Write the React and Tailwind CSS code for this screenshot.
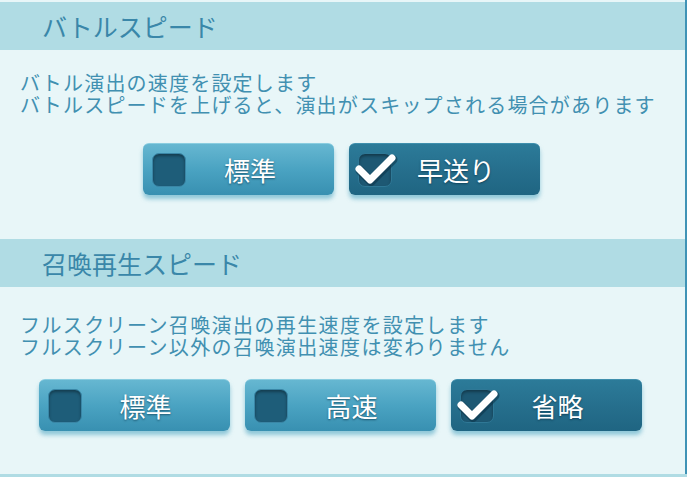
import React from "react";

const font = { fontFamily: '"Noto Sans CJK JP", "Noto Sans", sans-serif' };

function Check() {
  return (
    <svg
      className="absolute left-[-5px] top-[-3px] pointer-events-none"
      width="46"
      height="38"
      viewBox="0 0 46 38"
    >
      <polyline
        points="6,19 17,30 39,8"
        fill="none"
        stroke="rgba(10,50,70,0.55)"
        strokeWidth="9"
        strokeLinecap="round"
        strokeLinejoin="round"
        transform="translate(1,1.5)"
      />
      <polyline
        points="6,19 17,30 39,8"
        fill="none"
        stroke="#ffffff"
        strokeWidth="7"
        strokeLinecap="round"
        strokeLinejoin="round"
      />
    </svg>
  );
}

function OptionButton({ label, checked }) {
  return (
    <div
      className={
        "relative flex h-[52px] w-[191px] items-center rounded-[6px] pl-[9px] shadow-[0_4px_4px_rgba(70,160,190,0.55)] " +
        (checked
          ? "bg-gradient-to-b from-[#2c7b99] via-[#266f8d] to-[#1f6582] border-t border-[#3f8fad]"
          : "bg-gradient-to-b from-[#66b7d1] via-[#4aa3c2] to-[#3890b1] border-t border-[#8acde0]")
      }
    >
      <div className="relative h-[34px] w-[34px] shrink-0">
        <div
          className={
            "h-[34px] w-[34px] rounded-[7px] border shadow-[inset_0_2px_3px_rgba(0,0,0,0.35)] " +
            (checked ? "bg-[#1d5873] border-[#2f7896]" : "bg-[#1e5d79] border-[#3a86a6]")
          }
        />
        {checked && <Check />}
      </div>
      <div
        className="flex-1 pr-[20px] text-center text-[26px] leading-none text-white [text-shadow:0_1px_2px_rgba(0,40,60,0.6)]"
        style={font}
      >
        {label}
      </div>
    </div>
  );
}

function Header({ title, className = "" }) {
  return (
    <div className={"flex h-[48px] items-center bg-[#b0dce4] pl-[42px] " + className}>
      <span className="text-[25px] leading-none text-[#3a87a9]" style={font}>
        {title}
      </span>
    </div>
  );
}

export default function App() {
  return (
    <div className="h-[477px] w-[687px] overflow-hidden bg-[#e8f6f8]" style={font}>
      <div className="flex h-[474px] w-full flex-col border-r-2 border-[#3f93b6] pt-[2px]">
        <Header title="バトルスピード" />
        <div className="mt-[22px] pl-[20px] text-[20px] leading-[22px] text-[#4190b1] tracking-[1.2px]">
          <div>バトル演出の速度を設定します</div>
          <div>バトルスピードを上げると、演出がスキップされる場合があります</div>
        </div>
        <div className="mt-[27px] flex justify-center gap-[15px] pr-[2px]">
          <OptionButton label="標準" />
          <OptionButton label="早送り" checked />
        </div>
        <Header title="召喚再生スピード" className="mt-[44px]" />
        <div className="mt-[27px] pl-[20px] text-[20px] leading-[22px] text-[#4190b1] tracking-[1.4px]">
          <div>フルスクリーン召喚演出の再生速度を設定します</div>
          <div>フルスクリーン以外の召喚演出速度は変わりません</div>
        </div>
        <div className="mt-[21px] flex justify-center gap-[15px] pr-[5px]">
          <OptionButton label="標準" />
          <OptionButton label="高速" />
          <OptionButton label="省略" checked />
        </div>
      </div>
      <div className="h-[3px] w-full bg-[#b0dce4]" />
    </div>
  );
}
